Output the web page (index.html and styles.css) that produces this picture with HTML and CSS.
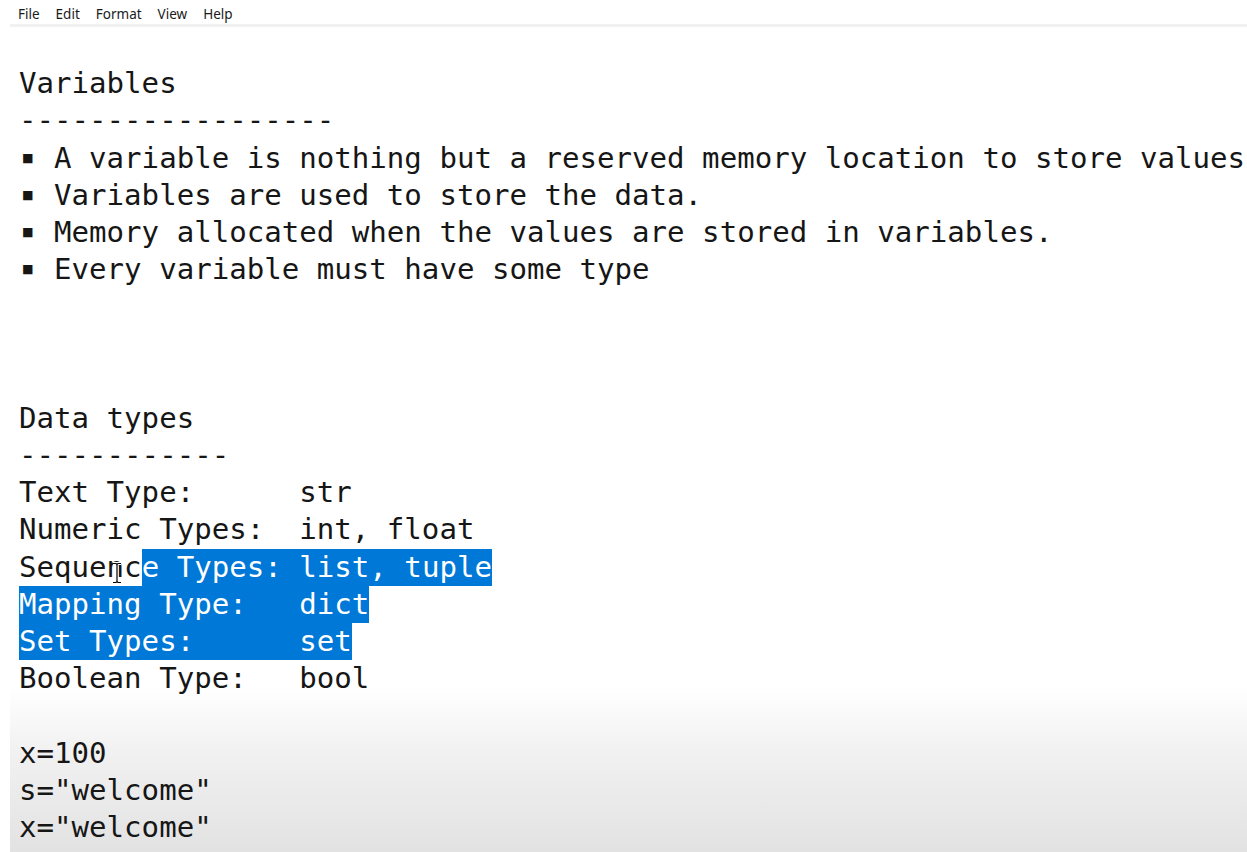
FILE: index.html
```html
<!DOCTYPE html>
<html>
<head>
<meta charset="utf-8">
<link rel="stylesheet" href="styles.css">
</head>
<body>
<div class="menubar">
  <span class="menu-item">File</span>
  <span class="menu-item">Edit</span>
  <span class="menu-item">Format</span>
  <span class="menu-item">View</span>
  <span class="menu-item">Help</span>
</div>
<div class="editor">
  <div class="line"> </div>
  <div class="line">Variables</div>
  <div class="line">------------------</div>
  <div class="line"><span class="bullet">▪</span> A variable is nothing but a reserved memory location to store values</div>
  <div class="line"><span class="bullet">▪</span> Variables are used to store the data.</div>
  <div class="line"><span class="bullet">▪</span> Memory allocated when the values are stored in variables.</div>
  <div class="line"><span class="bullet">▪</span> Every variable must have some type</div>
  <div class="line"> </div>
  <div class="line"> </div>
  <div class="line"> </div>
  <div class="line">Data types</div>
  <div class="line">------------</div>
  <div class="line">Text Type:      str</div>
  <div class="line">Numeric Types:  int, float</div>
  <div class="line">Sequenc<span class="sel">e Types: list, tuple</span></div>
  <div class="line"><span class="sel">Mapping Type:   dict</span></div>
  <div class="line"><span class="sel">Set Types:      set</span></div>
  <div class="line">Boolean Type:   bool</div>
  <div class="line"> </div>
  <div class="line">x=100</div>
  <div class="line">s="welcome"</div>
  <div class="line">x="welcome"</div>
  <svg class="ibeam" width="12" height="22" viewBox="0 0 12 22">
    <path d="M2 1.5h3l1 1 1-1h3M6 2.5v17M2 20.5h3l1-1 1 1h3" fill="none" stroke="#fff" stroke-width="3"/>
    <path d="M2 1.5h3l1 1 1-1h3M6 2.5v17M2 20.5h3l1-1 1 1h3" fill="none" stroke="#000" stroke-width="1.2"/>
  </svg>
</div>
</body>
</html>
```

FILE: styles.css
```css
html, body {
  margin: 0;
  padding: 0;
  background: #ffffff;
  height: 100%;
  overflow: hidden;
}

body {
  display: flex;
  flex-direction: column;
}

.menubar {
  margin-left: 10px;
  height: 21px;
  padding-top: 3px;
  padding-left: 8px;
  display: flex;
  align-items: center;
  gap: 16px;
  border-bottom: 3px solid #f1f1f1;
  font-family: "Noto Sans", "Open Sans", sans-serif;
  font-size: 13.5px;
  color: #1a1a1a;
}

.editor {
  position: relative;
  flex: 1;
  margin-left: 10px;
  padding-left: 9px;
  padding-top: 1px;
  font-family: "DejaVu Sans Mono", "Liberation Mono", monospace;
  font-size: 29.1px;
  line-height: 37.2px;
  color: #161616;
  background: linear-gradient(to bottom, #ffffff 0px, #ffffff 660px, #f2f2f2 720px, #e2e2e2 825px, #dedede 100%);
}

.line {
  white-space: pre;
  height: 37.2px;
}

.bullet {
  display: inline-block;
  width: 17.52px;
  font-size: 24px;
  line-height: 1;
  vertical-align: 3px;
  text-align: center;
}

.sel {
  display: inline-block;
  background: #0078d7;
  color: #ffffff;
}

.ibeam {
  position: absolute;
  left: 101px;
  top: 535px;
}
```
